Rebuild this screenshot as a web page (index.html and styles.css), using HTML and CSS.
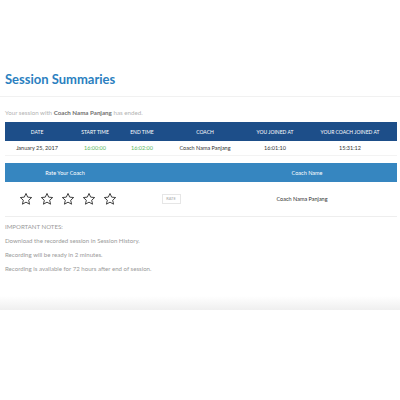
FILE: index.html
```html
<!DOCTYPE html>
<html>
<head>
<meta charset="utf-8">
<link rel="stylesheet" href="styles.css">
</head>
<body>
<div class="header">
  <h1 class="title">Session Summaries</h1>
</div>
<div class="content">
  <p class="subtitle">Your session with <b>Coach Nama Panjang</b> has ended.</p>
  <div class="summary">
    <div class="row head">
      <span>DATE</span><span>START TIME</span><span>END TIME</span><span>COACH</span><span>YOU JOINED AT</span><span>YOUR COACH JOINED AT</span>
    </div>
    <div class="row data">
      <span>January 25, 2017</span><span class="green">16:00:00</span><span class="green">16:02:00</span><span>Coach Nama Panjang</span><span>16:01:10</span><span>15:31:12</span>
    </div>
  </div>
  <div class="rating">
    <div class="rrow rhead">
      <span>Rate Your Coach</span><span></span><span>Coach Name</span>
    </div>
    <div class="rrow rdata">
      <div class="stars">
        <svg viewBox="0 0 24 24" class="star"><path d="M12 2.5l2.9 6.3 6.8.7-5.1 4.6 1.5 6.8L12 17.4l-6.1 3.5 1.5-6.8-5.1-4.6 6.8-.7z"/></svg>
        <svg viewBox="0 0 24 24" class="star"><path d="M12 2.5l2.9 6.3 6.8.7-5.1 4.6 1.5 6.8L12 17.4l-6.1 3.5 1.5-6.8-5.1-4.6 6.8-.7z"/></svg>
        <svg viewBox="0 0 24 24" class="star"><path d="M12 2.5l2.9 6.3 6.8.7-5.1 4.6 1.5 6.8L12 17.4l-6.1 3.5 1.5-6.8-5.1-4.6 6.8-.7z"/></svg>
        <svg viewBox="0 0 24 24" class="star"><path d="M12 2.5l2.9 6.3 6.8.7-5.1 4.6 1.5 6.8L12 17.4l-6.1 3.5 1.5-6.8-5.1-4.6 6.8-.7z"/></svg>
        <svg viewBox="0 0 24 24" class="star"><path d="M12 2.5l2.9 6.3 6.8.7-5.1 4.6 1.5 6.8L12 17.4l-6.1 3.5 1.5-6.8-5.1-4.6 6.8-.7z"/></svg>
      </div>
      <div class="btncell"><button class="rate">RATE</button></div>
      <span class="cname">Coach Nama Panjang</span>
    </div>
  </div>
  <div class="notes">
    <p>IMPORTANT NOTES:</p>
    <p>Download the recorded session in Session History.</p>
    <p>Recording will be ready in 2 minutes.</p>
    <p>Recording is available for 72 hours after end of session.</p>
  </div>
</div>
<div class="footer"></div>
</body>
</html>
```
FILE: styles.css
```css
html, body {
  margin: 0;
  padding: 0;
  background: #fff;
  font-family: Lato, "Open Sans", sans-serif;
}
.header {
  padding: 71px 5px 9px;
  border-bottom: 1px solid #f1f1f1;
}
.title {
  margin: 0;
  font-size: 13px;
  line-height: 16px;
  font-weight: 700;
  color: #2b7fc0;
}
.content {
  padding: 0 3px 0 5px;
}
.subtitle {
  margin: 11px 0 0;
  font-size: 6.2px;
  line-height: 10px;
  color: #b3b3b3;
}
.subtitle b {
  color: #707070;
  font-weight: 700;
}
.summary {
  margin-top: 4px;
}
.row {
  display: grid;
  grid-template-columns: 64px 52px 42px 84px 56px 94px;
  align-items: center;
  text-align: center;
}
.head {
  height: 19px;
  background: #1d4e89;
  color: #fff;
  font-size: 5px;
}
.data {
  height: 15px;
  font-size: 5.5px;
  color: #333;
  border-bottom: 1px solid #f3f3f3;
  box-sizing: border-box;
}
.green {
  color: #5cb85c;
}
.rating {
  margin-top: 7px;
}
.rrow {
  display: grid;
  grid-template-columns: 120px 92px 180px;
  align-items: center;
  text-align: center;
}
.rhead {
  height: 19px;
  background: #3686c0;
  color: #fff;
  font-size: 5.5px;
}
.rdata {
  height: 35px;
  border-bottom: 1px solid #eeeeee;
  box-sizing: border-box;
}
.stars {
  display: flex;
  justify-content: center;
  gap: 7px;
  padding-left: 6px;
}
.star {
  width: 14px;
  height: 14px;
  fill: none;
  stroke: #333;
  stroke-width: 1.6;
  stroke-linejoin: miter;
}
.btncell {
  display: flex;
  justify-content: center;
}
.rate {
  width: 19px;
  height: 10px;
  padding: 0;
  margin: 0;
  background: #fff;
  border: 1px solid #e6e6e6;
  color: #a8a8a8;
  font-family: Lato, sans-serif;
  font-size: 4px;
  line-height: 8px;
}
.cname {
  font-size: 5.5px;
  color: #333;
  padding-right: 10px;
}
.notes {
  margin-top: 3px;
  color: #9a9a9a;
  font-size: 6.1px;
}
.notes p {
  margin: 0;
  line-height: 14px;
}
.footer {
  margin-top: 20px;
  height: 14px;
  background: linear-gradient(to bottom, #ffffff, #efefef);
}
```
